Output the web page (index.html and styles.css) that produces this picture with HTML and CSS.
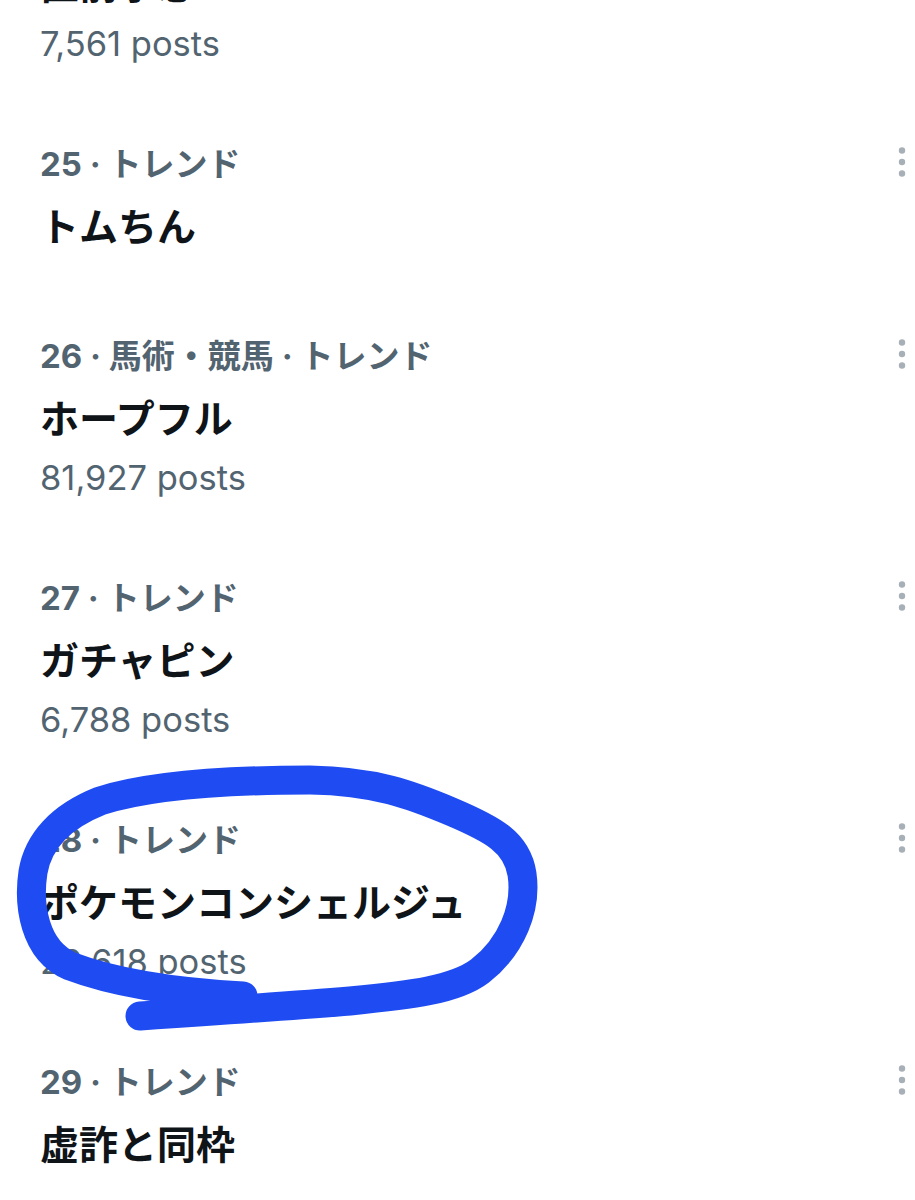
FILE: index.html
```html
<!DOCTYPE html>
<html lang="ja">
<head>
    <meta charset="UTF-8">
    <meta name="viewport" content="width=device-width, initial-scale=1.0">
    <title>トレンド</title>
    <link rel="stylesheet" href="styles.css">
</head>
<body>
    <div class="feed">
        <div class="trend">
            <div class="trend-body">
                <div class="trend-meta">24 · トレンド</div>
                <div class="trend-name">直前予想</div>
                <div class="trend-count">7,561 posts</div>
            </div>
            <div class="more"><svg viewBox="0 0 8 32" width="8" height="32"><circle cx="4" cy="4.5" r="3.2"/><circle cx="4" cy="16" r="3.2"/><circle cx="4" cy="27.5" r="3.2"/></svg></div>
        </div>

        <div class="trend">
            <div class="trend-body">
                <div class="trend-meta">25 · トレンド</div>
                <div class="trend-name">トムちん</div>
            </div>
            <div class="more"><svg viewBox="0 0 8 32" width="8" height="32"><circle cx="4" cy="4.5" r="3.2"/><circle cx="4" cy="16" r="3.2"/><circle cx="4" cy="27.5" r="3.2"/></svg></div>
        </div>

        <div class="trend">
            <div class="trend-body">
                <div class="trend-meta">26 · 馬術・競馬 · トレンド</div>
                <div class="trend-name">ホープフル</div>
                <div class="trend-count">81,927 posts</div>
            </div>
            <div class="more"><svg viewBox="0 0 8 32" width="8" height="32"><circle cx="4" cy="4.5" r="3.2"/><circle cx="4" cy="16" r="3.2"/><circle cx="4" cy="27.5" r="3.2"/></svg></div>
        </div>

        <div class="trend">
            <div class="trend-body">
                <div class="trend-meta">27 · トレンド</div>
                <div class="trend-name">ガチャピン</div>
                <div class="trend-count">6,788 posts</div>
            </div>
            <div class="more"><svg viewBox="0 0 8 32" width="8" height="32"><circle cx="4" cy="4.5" r="3.2"/><circle cx="4" cy="16" r="3.2"/><circle cx="4" cy="27.5" r="3.2"/></svg></div>
        </div>

        <div class="trend">
            <div class="trend-body">
                <div class="trend-meta">28 · トレンド</div>
                <div class="trend-name">ポケモンコンシェルジュ</div>
                <div class="trend-count">20,618 posts</div>
            </div>
            <div class="more"><svg viewBox="0 0 8 32" width="8" height="32"><circle cx="4" cy="4.5" r="3.2"/><circle cx="4" cy="16" r="3.2"/><circle cx="4" cy="27.5" r="3.2"/></svg></div>
        </div>

        <div class="trend">
            <div class="trend-body">
                <div class="trend-meta">29 · トレンド</div>
                <div class="trend-name">虚詐と同枠</div>
            </div>
            <div class="more"><svg viewBox="0 0 8 32" width="8" height="32"><circle cx="4" cy="4.5" r="3.2"/><circle cx="4" cy="16" r="3.2"/><circle cx="4" cy="27.5" r="3.2"/></svg></div>
        </div>
    </div>

    <!-- hand-drawn marker circle over trend 28 -->
    <svg class="marker" viewBox="0 0 915 1200" width="915" height="1200">
        <path d="M 243 996 C 190 993, 120 985, 70 966 C 34 950, 28 905, 33 872 C 38 842, 60 817, 100 801 C 150 785, 230 780, 310 780 C 375 781, 412 795, 452 812 C 492 829, 517 842, 522 874 C 527 908, 512 946, 480 971 C 455 990, 410 995, 350 1001 C 290 1006, 200 1012, 140 1016"/>
    </svg>
</body>
</html>
```

FILE: styles.css
```css
body {
    margin: 0;
    background-color: #ffffff;
    font-family: "Inter", "Noto Sans CJK JP", sans-serif;
    overflow: hidden;
}
.feed {
    margin-top: -139px;
}
.trend {
    display: flex;
    align-items: flex-start;
    padding: 32px 9px 34px 40px;
}
.trend-body {
    flex: 1;
}
.trend-meta {
    font-size: 33px;
    line-height: 58px;
    font-weight: 700;
    color: #536471;
}
.trend-name {
    font-size: 39px;
    line-height: 68px;
    font-weight: 700;
    color: #0f1419;
}
.trend-count {
    font-size: 34.5px;
    line-height: 50px;
    color: #536471;
}
.more {
    display: flex;
    align-items: center;
    height: 58px;
    margin-top: -2px;
}
.more svg {
    fill: #a8b0b7;
}
.marker {
    position: absolute;
    top: 0;
    left: 0;
    pointer-events: none;
}
.marker path {
    fill: none;
    stroke: #1f4cf2;
    stroke-width: 29;
    stroke-linecap: round;
    stroke-linejoin: round;
}
```
